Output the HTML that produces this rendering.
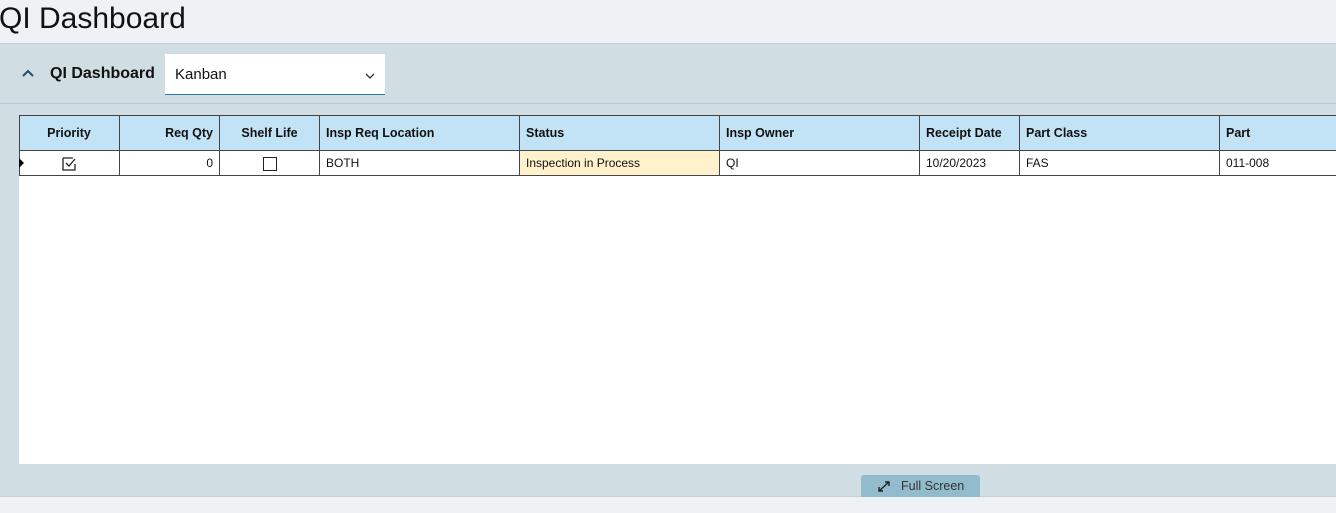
<!DOCTYPE html><html><head><style>
body{margin:0;width:1336px;height:513px;overflow:hidden;background:#eef2f4;font-family:"Liberation Sans",sans-serif;position:relative}
.t{position:absolute;left:-1px;top:0;font-size:30px;color:#111;line-height:38px}
.p{position:absolute;left:0;top:43px;width:1336px;height:454px;background:#d0dde2;border-top:1px solid #c4d0d6;border-bottom:1px solid #c4d0d6;box-sizing:border-box}
.hr{position:absolute;left:0;top:59px;width:1336px;height:1px;background:#b8c8cf}
.g{position:absolute;left:19px;top:115px;width:1317px;height:349px;background:#fff}
.c{position:absolute;box-sizing:border-box;border-top:1px solid #444;border-bottom:1px solid #444;border-right:1px solid #444;font-size:12px;color:#111;padding:0 6px;white-space:nowrap}
.h{top:0;height:36px;line-height:35px;background:#c2e3f5;font-weight:bold;font-size:12.5px}
.d{top:35px;height:26px;line-height:25px}
.fs{position:absolute;left:861px;top:475px;width:119px;height:22px;background:#92bccb;border-radius:3px 3px 0 0;font-size:12.5px;color:#333;line-height:22px}
</style></head><body>
<div class="t">QI Dashboard</div>
<div class="p">
<svg style="position:absolute;left:22px;top:25px" width="12" height="8"><path d="M1 7L6 2L11 7" stroke="#1f4f6e" stroke-width="2" fill="none"/></svg>
<div style="position:absolute;left:50px;top:21px;font-weight:bold;font-size:16px;color:#111">QI Dashboard</div>
<div style="position:absolute;left:165px;top:10px;width:220px;height:41px;background:#fff;border-bottom:1px solid #2a79a8;box-sizing:border-box">
<span style="position:absolute;left:10px;top:12px;font-size:15px;color:#111">Kanban</span>
<svg style="position:absolute;left:200px;top:19px" width="10" height="6"><path d="M1 1L5 5L9 1" stroke="#333" stroke-width="1.3" fill="none"/></svg></div>
<div class="hr"></div>
</div>
<div class="g">
<div class="c h" style="left:0;width:101px;text-align:center">Priority</div>
<div class="c h" style="left:101px;width:100px;text-align:right">Req Qty</div>
<div class="c h" style="left:201px;width:100px;text-align:center">Shelf Life</div>
<div class="c h" style="left:301px;width:200px">Insp Req Location</div>
<div class="c h" style="left:501px;width:200px">Status</div>
<div class="c h" style="left:701px;width:200px">Insp Owner</div>
<div class="c h" style="left:901px;width:100px">Receipt Date</div>
<div class="c h" style="left:1001px;width:200px">Part Class</div>
<div class="c h" style="left:1201px;width:120px">Part</div>
<div class="c d" style="left:0;width:101px;text-align:center"><svg width="14" height="14" style="vertical-align:middle"><path d="M1 1H11M1 1V13H13V7" stroke="#222" stroke-width="1.3" fill="none"/><path d="M4 6L7 9L13 2" stroke="#222" stroke-width="1.3" fill="none"/></svg></div>
<div class="c d" style="left:101px;width:100px;text-align:right">0</div>
<div class="c d" style="left:201px;width:100px;text-align:center"><span style="display:inline-block;width:12px;height:12px;border:1.5px solid #222;vertical-align:middle"></span></div>
<div class="c d" style="left:301px;width:200px">BOTH</div>
<div class="c d" style="left:501px;width:200px;background:#fff2cc">Inspection in Process</div>
<div class="c d" style="left:701px;width:200px">QI</div>
<div class="c d" style="left:901px;width:100px">10/20/2023</div>
<div class="c d" style="left:1001px;width:200px">FAS</div>
<div class="c d" style="left:1201px;width:120px">011-008</div>
<div style="position:absolute;left:0;top:0;width:1px;height:61px;background:#444"></div>
<svg style="position:absolute;left:0;top:43px" width="5" height="10"><path d="M0 0L5 5L0 10Z" fill="#000"/></svg>
</div>
<div class="fs"><svg style="position:absolute;left:16px;top:5px" width="14" height="13"><path d="M2 11L12 2M8 2H12V6M2 7V11H6" stroke="#222" stroke-width="1.4" fill="none"/></svg><span style="position:absolute;left:40px">Full Screen</span></div>
</body></html>
